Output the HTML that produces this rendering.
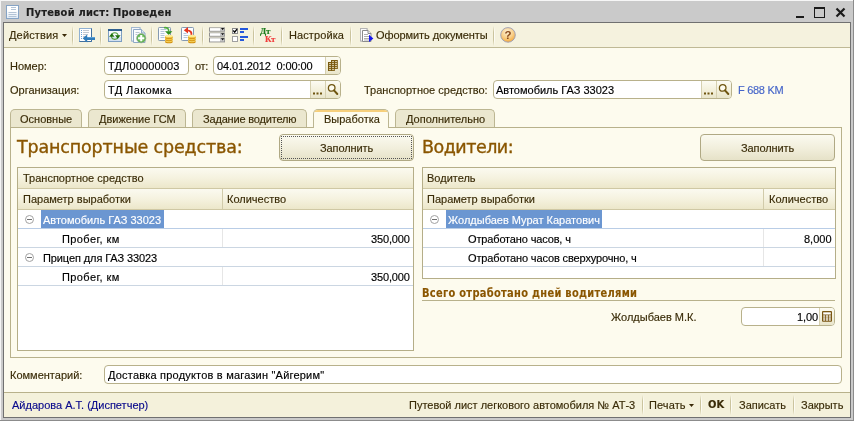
<!DOCTYPE html>
<html><head><meta charset="utf-8">
<style>
*{box-sizing:border-box;margin:0;padding:0}
html,body{width:854px;height:421px;overflow:hidden;background:#cacaca}
body{position:relative;will-change:transform;font-family:"Liberation Sans",sans-serif;font-size:11px;color:#000}
.abs{position:absolute}
.t{position:absolute;white-space:nowrap;line-height:14px;height:14px;font-size:11px;-webkit-text-stroke:0.150px}
.tc{color:#3a2c08}
#title{left:0;top:0;width:854px;height:22px;background:#cacaca;border-top:1px solid #f6f6f6}
#win{left:3px;top:22px;width:848px;height:396px;background:#fdfbee;border:1px solid #707070}
#toolbar{left:4px;top:23px;width:846px;height:25px;background:#f5f2de;border-bottom:1px solid #bfb995}
.sep{position:absolute;width:2px;top:26px;height:20px;background:linear-gradient(90deg,#cbc49e 50%,#fdfcf4 50%);-webkit-mask-image:linear-gradient(transparent,#000 30%,#000 70%,transparent);mask-image:linear-gradient(transparent,#000 30%,#000 70%,transparent)}
.inp{position:absolute;background:#fff;border:1px solid #b8b18b;border-radius:4px;height:19px}
.ib{position:absolute;top:0;bottom:0;border-left:1px solid #d6d0b0;background:linear-gradient(#fcfbf2,#f4f1dd 50%,#e9e5cb)}
.tab{position:absolute;top:109px;height:18px;background:#ebe7cf;border:1px solid #bcb692;border-bottom:none;border-radius:5px 5px 0 0}
.tab.act{height:19px;background:#fdfbee;z-index:3;overflow:hidden}
.tab.act:before{content:"";position:absolute;left:0;right:0;top:0;height:2px;background:#f6cf7c}
#panel{left:10px;top:127px;width:832px;height:231px;border:1px solid #b8b18b;background:#fdfbee}
.h1{position:absolute;font-size:17.500px;color:#8a5600;-webkit-text-stroke:0.350px #8a5600;white-space:nowrap;line-height:24px;font-family:"DejaVu Sans","Liberation Sans",sans-serif}
.btn{position:absolute;border:1px solid #b0a984;border-radius:4px;background:linear-gradient(#fbfaf0,#f1eedb 55%,#e6e2c8)}
.tbl{position:absolute;border:1px solid #b5ae88;background:#fff;overflow:hidden}
.hd{position:absolute;left:0;right:0;background:linear-gradient(#fbfaf0,#f5f2df 50%,#ece7ca);border-bottom:1px solid #cfc8a4}
.rl{position:absolute;left:0;right:0;height:1px;background:#cbd6e2}
.vl{position:absolute;width:1px;background:#e6e6e6}
.sel{position:absolute;background:#6b96d1;height:18px}
#status{left:4px;top:392px;width:846px;height:25px;background:#f4f1db;border-top:1px solid #b8b18b}
.ssep{position:absolute;width:2px;top:395px;height:20px;background:linear-gradient(90deg,#cbc49e 50%,#fdfcf4 50%);-webkit-mask-image:linear-gradient(transparent,#000 30%,#000 70%,transparent);mask-image:linear-gradient(transparent,#000 30%,#000 70%,transparent)}
svg{position:absolute;overflow:visible}
</style></head><body>
<div id="title" class="abs"></div>
<div class="abs" style="left:0;top:0;width:1px;height:421px;background:#f4f4f4"></div><div class="abs" style="left:853px;top:0;width:1px;height:421px;background:#8c8c8c"></div><div class="abs" style="left:0;top:420px;width:854px;height:1px;background:#8c8c8c"></div>
<div class="t" style="left:26px;top:5px;font-weight:bold;font-family:'DejaVu Sans Condensed','Liberation Sans',sans-serif;letter-spacing:0.230px;line-height:16px;height:16px;color:#1e1e1e">Путевой лист: Проведен</div>
<div id="win" class="abs"></div>
<div id="toolbar" class="abs"></div>
<div class="t tc" style="left:9px;top:28px;letter-spacing:0.160px">Действия</div>
<div class="sep" style="left:72px"></div>
<div class="sep" style="left:100px"></div>
<div class="sep" style="left:151px"></div>
<div class="sep" style="left:202px"></div>
<div class="sep" style="left:253px"></div>
<div class="sep" style="left:281px"></div>
<div class="sep" style="left:350px"></div>
<div class="sep" style="left:493px"></div>
<div class="t tc" style="left:289px;top:28px;letter-spacing:0.100px">Настройка</div>
<div class="t tc" style="left:376px;top:28px;letter-spacing:-0.080px">Оформить документы</div>

<div class="t tc" style="left:10px;top:59px">Номер:</div>
<div class="inp" style="left:104px;top:56px;width:85px"></div>
<div class="t" style="left:108px;top:59px;letter-spacing:0.140px">ТДЛ00000003</div>
<div class="t tc" style="left:195px;top:59px;letter-spacing:-0.300px">от:</div>
<div class="inp" style="left:213px;top:56px;width:128px"><div class="ib" style="left:111px;right:0;border-radius:0 3px 3px 0"></div></div>
<div class="t" style="left:217px;top:59px;letter-spacing:-0.130px">04.01.2012&nbsp; 0:00:00</div>

<div class="t tc" style="left:10px;top:83px">Организация:</div>
<div class="inp" style="left:104px;top:80px;width:237px"><div class="ib" style="left:205px;width:15px"></div><div class="ib" style="left:220px;right:0;border-radius:0 3px 3px 0"></div></div>
<div class="t" style="left:108px;top:83px;letter-spacing:0.400px">ТД Лакомка</div>
<div class="t tc" style="left:364px;top:83px">Транспортное средство:</div>
<div class="inp" style="left:493px;top:80px;width:239px"><div class="ib" style="left:207px;width:15px"></div><div class="ib" style="left:222px;right:0;border-radius:0 3px 3px 0"></div></div>
<div class="t" style="left:496px;top:83px">Автомобиль ГАЗ 33023</div>
<div class="t" style="left:738px;top:83px;color:#4565c9;letter-spacing:-0.300px">F 688 KM</div>

<div class="tab" style="left:10px;width:72px"></div><div class="t tc" style="left:20px;top:112px;z-index:4">Основные</div>
<div class="tab" style="left:88px;width:98px"></div><div class="t tc" style="left:99px;top:112px;z-index:4">Движение ГСМ</div>
<div class="tab" style="left:192px;width:115px"></div><div class="t tc" style="left:203px;top:112px;z-index:4;letter-spacing:-0.180px">Задание водителю</div>
<div class="tab act" style="left:313px;width:76px"></div><div class="t tc" style="left:324px;top:112px;z-index:4">Выработка</div>
<div class="tab" style="left:395px;width:100px"></div><div class="t tc" style="left:406px;top:112px;z-index:4">Дополнительно</div>
<div id="panel" class="abs"></div>

<div class="h1" style="left:17px;top:135px;letter-spacing:-0.160px">Транспортные средства:</div>
<div class="btn" style="left:279px;top:134px;width:135px;height:27px"><div class="abs" style="left:1px;top:1px;right:1px;bottom:1px;border:1px dotted #555"></div></div>
<div class="t tc" style="left:320px;top:141px;letter-spacing:-0.100px">Заполнить</div>
<div class="h1" style="left:422px;top:135px;letter-spacing:-0.500px">Водители:</div>
<div class="btn" style="left:700px;top:134px;width:135px;height:27px"></div>
<div class="t tc" style="left:741px;top:141px;letter-spacing:-0.100px">Заполнить</div>

<div class="tbl" style="left:17px;top:167px;width:397px;height:184px">
 <div class="hd" style="top:0;height:21px"></div>
 <div class="hd" style="top:21px;height:21px"></div>
 <div class="vl" style="left:204px;top:21px;height:20px;background:#d1cbaa"></div>
 <div class="sel" style="left:23px;top:42px;width:123px"></div>
 <div class="rl" style="top:60px;background:#b9cde6"></div>
 <div class="rl" style="top:79px"></div>
 <div class="rl" style="top:98px"></div>
 <div class="rl" style="top:117px"></div>
 <div class="vl" style="left:204px;top:61px;height:18px"></div>
 <div class="vl" style="left:204px;top:99px;height:18px"></div>
</div>
<div class="t tc" style="left:23px;top:171px">Транспортное средство</div>
<div class="t tc" style="left:23px;top:192px">Параметр выработки</div>
<div class="t tc" style="left:227px;top:192px">Количество</div>
<div class="t" style="left:43px;top:213px;color:#fff">Автомобиль ГАЗ 33023</div>
<div class="t" style="left:62px;top:232px;letter-spacing:0.400px">Пробег, км</div>
<div class="t" style="left:371px;top:232px;letter-spacing:-0.150px">350,000</div>
<div class="t" style="left:43px;top:251px;letter-spacing:-0.100px">Прицеп для ГАЗ 33023</div>
<div class="t" style="left:62px;top:270px;letter-spacing:0.400px">Пробег, км</div>
<div class="t" style="left:371px;top:270px;letter-spacing:-0.150px">350,000</div>

<div class="tbl" style="left:422px;top:167px;width:414px;height:112px">
 <div class="hd" style="top:0;height:21px"></div>
 <div class="hd" style="top:21px;height:21px"></div>
 <div class="vl" style="left:340px;top:21px;height:20px;background:#d1cbaa"></div>
 <div class="sel" style="left:23px;top:42px;width:156px"></div>
 <div class="rl" style="top:60px;background:#b9cde6"></div>
 <div class="rl" style="top:79px"></div>
 <div class="rl" style="top:98px"></div>
 <div class="vl" style="left:340px;top:61px;height:18px"></div>
 <div class="vl" style="left:340px;top:80px;height:18px"></div>
</div>
<div class="t tc" style="left:427px;top:171px">Водитель</div>
<div class="t tc" style="left:427px;top:192px">Параметр выработки</div>
<div class="t tc" style="left:769px;top:192px">Количество</div>
<div class="t" style="left:448px;top:213px;color:#fff">Жолдыбаев Мурат Каратович</div>
<div class="t" style="left:468px;top:232px;letter-spacing:-0.150px">Отработано часов, ч</div>
<div class="t" style="left:804px;top:232px">8,000</div>
<div class="t" style="left:468px;top:251px;letter-spacing:-0.130px">Отработано часов сверхурочно, ч</div>

<div class="t" style="left:422px;top:287px;transform:scaleY(1.120);transform-origin:0 11px;font-weight:bold;color:#8a5600;font-family:'DejaVu Sans Condensed','Liberation Sans',sans-serif;letter-spacing:0.290px;-webkit-text-stroke:0.100px">Всего отработано дней водителями</div>
<div class="abs" style="left:422px;top:300px;width:413px;height:1px;background:#b8b18b"></div>
<div class="t tc" style="left:611px;top:310px">Жолдыбаев М.К.</div>
<div class="inp" style="left:741px;top:307px;width:94px"><div class="ib" style="left:77px;right:0;border-radius:0 3px 3px 0"></div></div>
<div class="t" style="left:797px;top:310px;letter-spacing:-0.100px">1,00</div>

<div class="t tc" style="left:10px;top:368px">Комментарий:</div>
<div class="inp" style="left:104px;top:365px;width:738px"></div>
<div class="t" style="left:108px;top:368px;letter-spacing:0.200px">Доставка продуктов в магазин "Айгерим"</div>

<div id="status" class="abs"></div>
<div class="t" style="left:12px;top:398px;color:#0a0a8c">Айдарова А.Т. (Диспетчер)</div>
<div class="t tc" style="left:409px;top:398px">Путевой лист легкового автомобиля № АТ-3</div>
<div class="ssep" style="left:642px"></div>
<div class="t tc" style="left:649px;top:398px;letter-spacing:0.100px">Печать</div>
<div class="ssep" style="left:700px"></div>
<div class="t tc" style="left:708px;top:398px;font-weight:bold;font-family:'DejaVu Sans Condensed','Liberation Sans',sans-serif">OK</div>
<div class="ssep" style="left:730px"></div>
<div class="t tc" style="left:739px;top:398px">Записать</div>
<div class="ssep" style="left:793px"></div>
<div class="t tc" style="left:801px;top:398px">Закрыть</div>

<!-- title icon -->
<svg style="left:6px;top:5px" width="13" height="14" viewBox="0 0 13 14"><defs><linearGradient id="tg" x1="0" y1="0" x2="0" y2="1"><stop offset="0.400" stop-color="#fff"/><stop offset="1" stop-color="#dfeaf6"/></linearGradient></defs><rect x="0.500" y="0.500" width="12" height="13" fill="url(#tg)" stroke="#86a4c6"/><g stroke="#b4c4d6" stroke-width="1"><path d="M5 2.500h5M5 4.500h5M2.500 7.500h8M2.500 9.500h8M2.500 11.500h8"/></g></svg>
<!-- window controls -->
<svg style="left:796px;top:6px" width="52" height="14" viewBox="0 0 52 14"><rect x="0" y="10" width="8" height="2" fill="#1a1a1a"/><rect x="18.5" y="2" width="10" height="9.5" fill="none" stroke="#1a1a1a" stroke-width="1"/><rect x="18" y="1" width="11" height="2" fill="#1a1a1a"/><path d="M40.500 2.500L48.500 10.500M48.500 2.500L40.500 10.500" stroke="#1a1a1a" stroke-width="2.200"/></svg>
<!-- actions arrow -->
<svg style="left:62px;top:34px" width="5" height="3" viewBox="0 0 5 3"><path d="M0 0h5L2.500 3z" fill="#3a2a08"/></svg>
<!-- icon1: doc with blue arrow -->
<svg style="left:79px;top:28px" width="16" height="15" viewBox="0 0 16 15"><rect x="0.500" y="0.500" width="12" height="13" fill="#fff" stroke="#8fb0d2"/><path d="M12.500 0.500v13h-12" fill="none" stroke="#3f6f9f"/><g stroke="#c2c9d2"><path d="M4 2.500h6M4 4.500h6M4 6.500h5M4 8.500h2M4 10.500h1"/></g><g stroke="#6aa2d8"><path d="M2 2.500h1M2 4.500h1M2 6.500h1M2 8.500h1M2 10.500h1"/></g><path d="M3.700 10.300L8.200 6.500V9H16v3H8.200v2.500z" fill="#2f7cbb"/><path d="M8.200 9H16v1H8.200z" fill="#5a9fd6"/></svg>
<!-- icon2: window w/ green refresh -->
<svg style="left:108px;top:29px" width="14" height="13" viewBox="0 0 14 13"><rect x="0.500" y="0.500" width="13" height="12" fill="#f6f9fd" stroke="#7d9ec2"/><rect x="0" y="0" width="14" height="2" fill="#2f6090"/><rect x="1" y="8" width="12" height="4" fill="#d3e1f1"/><circle cx="6.800" cy="7.100" r="3.300" fill="none" stroke="#55a03c" stroke-width="1.100"/><path d="M1 7.700L3.800 4.300L6.600 7.700z" fill="#1f6f0f"/><path d="M7 6.300L12.600 6.300L9.800 9.700z" fill="#1f6f0f"/></svg>
<!-- icon3: copy docs + green plus -->
<svg style="left:131px;top:27px" width="16" height="17" viewBox="0 0 16 17"><path d="M0.500 0.500h8.500v2M0.500 0.500v13.500h2" fill="#f4f7fb" stroke="#a3b9d0"/><rect x="0.500" y="0.500" width="8.500" height="13.500" fill="#f4f7fb" stroke="#a3b9d0"/><path d="M2.500 2.500h8l3.500 3.500v9.500h-11.500z" fill="#fbfcfe" stroke="#8fa9c6"/><path d="M10.500 2.500v3.500h3.500" fill="#dfe8f2" stroke="#8fa9c6"/><path d="M4.500 5.500h4M4.500 7.500h2" stroke="#b8c4d2"/><circle cx="10.200" cy="11.200" r="4.600" fill="#7cc66c" stroke="#98a898" stroke-width="0.800"/><circle cx="10.200" cy="11.200" r="3.800" fill="none" stroke="#56a846" stroke-width="0.800"/><path d="M9.200 8.100h2v2.100h2.100v2h-2.100v2.100h-2v-2.100h-2.100v-2h2.100z" fill="#fff"/></svg>
<!-- icon4: doc + green arrow + coins -->
<svg style="left:158px;top:27px" width="16" height="17" viewBox="0 0 16 17"><rect x="0.500" y="0.500" width="12" height="13" rx="0.800" fill="#fbfcfe" stroke="#8499b2"/><path d="M2.500 2.500h6M2.500 4.500h4M2.500 6.500h4M2.500 8.500h4M2.500 10.500h4" stroke="#b4c6da" stroke-width="1"/><path d="M6 0.700C9.300 0.200 10.900 1.800 10.700 4.500" fill="none" stroke="#4caa38" stroke-width="1.600"/><path d="M7 4.200h7.400L10.700 8z" fill="#2f8f1f"/><g><ellipse cx="10.900" cy="14.900" rx="3.800" ry="1.400" fill="#cf8d12"/><ellipse cx="10.900" cy="14.100" rx="3.800" ry="1.400" fill="#efbb2c"/><ellipse cx="10.900" cy="13.200" rx="3.700" ry="1.250" fill="#fdeb96"/><ellipse cx="10.900" cy="12.800" rx="3.800" ry="1.400" fill="#cf8d12"/><ellipse cx="10.900" cy="12.000" rx="3.800" ry="1.400" fill="#efbb2c"/><ellipse cx="10.900" cy="11.100" rx="3.700" ry="1.250" fill="#fdeb96"/><ellipse cx="10.900" cy="10.700" rx="3.800" ry="1.400" fill="#cf8d12"/><ellipse cx="10.900" cy="9.900" rx="3.800" ry="1.400" fill="#efbb2c"/><ellipse cx="10.900" cy="9.000" rx="3.700" ry="1.250" fill="#fdeb96"/></g></svg>
<!-- icon5: doc + red arrow + coins -->
<svg style="left:181px;top:27px" width="16" height="17" viewBox="0 0 16 17"><rect x="0.500" y="0.500" width="12" height="13" rx="0.800" fill="#fbfcfe" stroke="#8499b2"/><path d="M2.500 6.500h3M2.500 8.500h5M2.500 10.500h4" stroke="#b4c6da" stroke-width="1"/><path d="M10.300 9C11.300 5.500 9.500 3.400 6 3.400" fill="none" stroke="#e6341c" stroke-width="1.900"/><path d="M2.800 3.300L7 0v6.600z" fill="#e6341c"/><g><ellipse cx="10.900" cy="14.900" rx="3.800" ry="1.400" fill="#cf8d12"/><ellipse cx="10.900" cy="14.100" rx="3.800" ry="1.400" fill="#efbb2c"/><ellipse cx="10.900" cy="13.200" rx="3.700" ry="1.250" fill="#fdeb96"/><ellipse cx="10.900" cy="12.800" rx="3.800" ry="1.400" fill="#cf8d12"/><ellipse cx="10.900" cy="12.000" rx="3.800" ry="1.400" fill="#efbb2c"/><ellipse cx="10.900" cy="11.100" rx="3.700" ry="1.250" fill="#fdeb96"/><ellipse cx="10.900" cy="10.700" rx="3.800" ry="1.400" fill="#cf8d12"/><ellipse cx="10.900" cy="9.900" rx="3.800" ry="1.400" fill="#efbb2c"/><ellipse cx="10.900" cy="9.000" rx="3.700" ry="1.250" fill="#fdeb96"/></g></svg>
<!-- icon6: three combo bars -->
<svg style="left:209px;top:27px" width="16" height="16" viewBox="0 0 16 16"><g transform="translate(0,0.400)"><rect x="0" y="0" width="16" height="4.300" fill="#909090"/><rect x="1" y="0.700" width="10.500" height="2.700" fill="#fff"/><rect x="12" y="0.700" width="3.200" height="2.700" fill="#cdcdcd"/><path d="M12 0.700h3.200l-1.600 2.100z" fill="#111"/></g><g transform="translate(0,5.500)"><rect x="0" y="0" width="16" height="4.200" fill="#909090"/><rect x="1" y="0.700" width="10.500" height="2.600" fill="#fff"/><rect x="12" y="0.700" width="3.200" height="2.600" fill="#cdcdcd"/><path d="M12 0.700h3.200l-1.600 2.100z" fill="#111"/></g><g transform="translate(0,10.600)"><rect x="0" y="0" width="16" height="4.800" fill="#909090"/><rect x="1" y="0.700" width="10.500" height="3.200" fill="#fff"/><rect x="12" y="0.700" width="3.200" height="3.200" fill="#cdcdcd"/><path d="M12 0.700h3.200l-1.600 2.100z" fill="#111"/></g></svg>
<!-- icon7: checkboxes + blue bars -->
<svg style="left:232px;top:28px" width="16" height="14" viewBox="0 0 16 14"><rect x="0.500" y="0.500" width="5" height="5" fill="#fff" stroke="#8a8a8a"/><path d="M1.300 2.500L2.700 4.200L5 1.200" fill="none" stroke="#000" stroke-width="1.300"/><rect x="0.500" y="8.500" width="5" height="5" fill="#fff" stroke="#a0a0a0"/><g fill="#2458dc"><rect x="8" y="0" width="8" height="2"/><rect x="8" y="3" width="4" height="2"/><rect x="8" y="8" width="8" height="2"/><rect x="8" y="11" width="4" height="2"/></g></svg>
<!-- doc icon before Оформить -->
<svg style="left:360px;top:28px" width="14" height="15" viewBox="0 0 14 15"><path d="M0.500 0.500h6.500v2M0.500 0.500v12.500h2" fill="#fff" stroke="#b4b4b4"/><rect x="0.500" y="0.500" width="6.500" height="12.500" fill="#fbfbfb" stroke="#b4b4b4"/><path d="M2.500 2.500h5.500l3 3v8h-8.500z" fill="#fff" stroke="#8c8c8c"/><path d="M8 2.500v3h3" fill="#eee" stroke="#8c8c8c"/><path d="M4 6.500h4M4 8.500h5M4 10.500h5M4 12h5" stroke="#a6a6a6" stroke-width="0.900"/><path d="M9 6.800L13.400 10.400L9 14z" fill="#1616f0"/></svg>
<!-- help icon -->
<svg style="left:500px;top:27px" width="16" height="16" viewBox="0 0 16 16"><defs><radialGradient id="hg" cx="0.450" cy="0.300" r="0.750"><stop offset="0" stop-color="#fdf0d4"/><stop offset="0.550" stop-color="#f9cf88"/><stop offset="1" stop-color="#f3a22e"/></radialGradient></defs><circle cx="8" cy="7.900" r="7.300" fill="url(#hg)" stroke="#9a9cb4" stroke-width="0.900"/><text x="8" y="12" text-anchor="middle" font-family="Liberation Sans, sans-serif" font-weight="bold" font-size="11.500" fill="#8a4a1c">?</text></svg>
<!-- calendar icon -->
<svg style="left:328px;top:60px" width="10" height="11" viewBox="0 0 10 11"><g fill="#7a5a10"><rect x="3" y="0" width="6.800" height="9"/><rect x="0" y="2" width="6.800" height="9"/></g><g fill="#f3efd6"><rect x="4.100" y="1.200" width="1.800" height="0.900"/><rect x="7.100" y="1.200" width="1.800" height="0.900"/><rect x="1.100" y="3.200" width="1.800" height="0.900"/><rect x="4.100" y="3.200" width="1.800" height="0.900"/><rect x="7.100" y="3.200" width="1.800" height="0.900"/><rect x="1.100" y="5.200" width="1.800" height="0.900"/><rect x="4.100" y="5.200" width="1.800" height="0.900"/><rect x="7.100" y="5.200" width="1.800" height="0.900"/><rect x="1.100" y="7.200" width="1.800" height="0.900"/><rect x="4.100" y="7.200" width="1.800" height="0.900"/><rect x="7.100" y="7.200" width="1.800" height="0.900"/><rect x="1.100" y="9.200" width="1.800" height="0.900"/><rect x="4.100" y="9.200" width="1.800" height="0.900"/></g></svg>
<!-- dots + search (org) -->
<svg style="left:313px;top:84px" width="26" height="12" viewBox="0 0 26 12"><g fill="#6f5510"><rect x="0" y="8.500" width="2" height="2"/><rect x="3.500" y="8.500" width="2" height="2"/><rect x="7" y="8.500" width="2" height="2"/></g><circle cx="18.700" cy="3.900" r="3.300" fill="#fdfbee" stroke="#6f5510" stroke-width="1.300"/><path d="M21 6.400L24.300 10" stroke="#6f5510" stroke-width="2" stroke-linecap="round"/></svg>
<!-- dots + search (vehicle) -->
<svg style="left:704px;top:84px" width="26" height="12" viewBox="0 0 26 12"><g fill="#6f5510"><rect x="0" y="8.500" width="2" height="2"/><rect x="3.500" y="8.500" width="2" height="2"/><rect x="7" y="8.500" width="2" height="2"/></g><circle cx="18.700" cy="3.900" r="3.300" fill="#fdfbee" stroke="#6f5510" stroke-width="1.300"/><path d="M21 6.400L24.300 10" stroke="#6f5510" stroke-width="2" stroke-linecap="round"/></svg>
<!-- calc icon -->
<svg style="left:822px;top:311px" width="10" height="11" viewBox="0 0 10 11"><rect x="0" y="0" width="10" height="10.700" rx="1" fill="#7a5612"/><rect x="1.200" y="1.300" width="7.600" height="2.200" fill="#fff"/><g fill="#fff"><rect x="1.200" y="4.400" width="2" height="1.300"/><rect x="4.000" y="4.400" width="2" height="1.300"/><rect x="6.800" y="4.400" width="2" height="1.300"/><rect x="1.200" y="6.400" width="2" height="1.300"/><rect x="4.000" y="6.400" width="2" height="1.300"/><rect x="6.800" y="6.400" width="2" height="1.300"/><rect x="1.200" y="8.300" width="2" height="1.300"/><rect x="4.000" y="8.300" width="2" height="1.300"/><rect x="6.800" y="8.300" width="2" height="1.300"/></g></svg>
<!-- tree minus circles -->
<svg style="left:25px;top:215px" width="9" height="9" viewBox="0 0 9 9"><circle cx="4.500" cy="4.500" r="4" fill="#fff" stroke="#a2a2a2"/><rect x="2" y="4" width="5" height="1" fill="#707070"/></svg>
<svg style="left:25px;top:253px" width="9" height="9" viewBox="0 0 9 9"><circle cx="4.500" cy="4.500" r="4" fill="#fff" stroke="#a2a2a2"/><rect x="2" y="4" width="5" height="1" fill="#707070"/></svg>
<svg style="left:430px;top:215px" width="9" height="9" viewBox="0 0 9 9"><circle cx="4.500" cy="4.500" r="4" fill="#fff" stroke="#a2a2a2"/><rect x="2" y="4" width="5" height="1" fill="#707070"/></svg>
<!-- print arrow -->
<svg style="left:689px;top:404px" width="5" height="3" viewBox="0 0 5 3"><path d="M0 0h5L2.500 3z" fill="#3a2a08"/></svg>
<!-- ДтКт -->
<div class="t" style="left:260px;top:23.500px;font-family:'Liberation Serif',serif;font-weight:bold;font-size:9px;color:#1c7c1c;letter-spacing:-0.300px">Дт</div>
<div class="t" style="left:265px;top:31.500px;font-family:'Liberation Serif',serif;font-weight:bold;font-size:9px;color:#f03c3c;letter-spacing:-0.300px">Кт</div>
</body></html>
